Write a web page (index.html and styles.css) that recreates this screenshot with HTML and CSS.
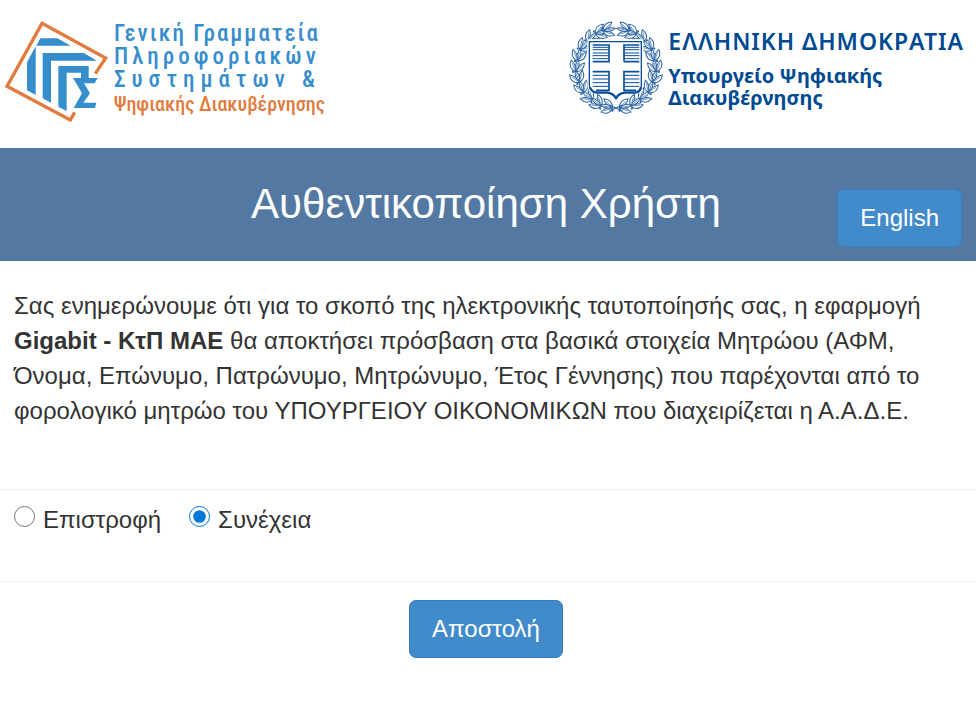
FILE: index.html
```html
<!DOCTYPE html>
<html lang="el">
<head>
<meta charset="utf-8">
<meta name="viewport" content="width=device-width, initial-scale=1">
<title>Αυθεντικοποίηση Χρήστη</title>
<link rel="stylesheet" href="styles.css">
</head>
<body>
<header class="brands">
  <div class="brand gsis">
    <svg class="gsis-mark" viewBox="0 0 360 360" aria-hidden="true">
      <path d="M286 191 317 144 126 40 21 229 211 330 224 307" fill="none" stroke="#e17b3e" stroke-width="10"/>
      <g fill="#368dcc">
        <path d="M121 85H172L212 107H109Z"/>
        <path d="M81 157 107 109V255L81 241Z"/>
        <path d="M128 129H251L291 152H153V278L128 265Z"/>
        <path d="M175 168H266V204H293L284 220H252L270 250 250 278H289L285 294H221L246 250 219 204H243V188H200V303L175 290Z"/>
      </g>
    </svg>
    <div class="gsis-name">
      <span class="row-a">Γενική Γραμματεία</span>
      <span class="row-b">Πληροφοριακών</span>
      <span class="row-c">Συστημάτων &amp;</span>
      <span class="row-d">Ψηφιακής Διακυβέρνησης</span>
    </div>
  </div>
  <div class="brand ministry">
    <svg class="emblem" viewBox="0 0 330 345" aria-hidden="true">
      <defs>
        <g id="leaves" fill="#fff" stroke="#2d66a5" stroke-width="3">
          <path d="M-2 14Q-25 8-20-17Q-2-8-2 14Z"/>
          <path d="M2 14Q23 8 21-16Q2-8 2 14Z"/>
          <path d="M0 13Q-10-4 1-23Q11-4 0 13Z"/>
          <path d="M-5 7-15-9M5 7 15-8M0 16V-12" fill="none" stroke-width="2"/>
          <circle cx="-8" cy="16" r="2"/>
        </g>
        <g id="branch">
          <use href="#leaves" transform="rotate(12 168 175) translate(168 293) rotate(-90)"/>
          <use href="#leaves" transform="rotate(28 168 175) translate(168 293) rotate(-80)"/>
          <use href="#leaves" transform="rotate(44 168 175) translate(168 293) rotate(-98)"/>
          <use href="#leaves" transform="rotate(60 168 175) translate(168 293) rotate(-82)"/>
          <use href="#leaves" transform="rotate(76 168 175) translate(168 293) rotate(-98)"/>
          <use href="#leaves" transform="rotate(92 168 175) translate(168 293) rotate(-82)"/>
          <use href="#leaves" transform="rotate(108 168 175) translate(168 293) rotate(-98)"/>
          <use href="#leaves" transform="rotate(124 168 175) translate(168 293) rotate(-82)"/>
          <use href="#leaves" transform="rotate(140 168 175) translate(168 293) rotate(-98)"/>
          <use href="#leaves" transform="rotate(156 168 175) translate(168 293) rotate(-84)"/>
          <use href="#leaves" transform="rotate(168 168 175) translate(168 293) rotate(-92)"/>
        </g>
      </defs>
      <use href="#branch"/>
      <use href="#branch" transform="translate(336 0) scale(-1 1)"/>
      <path d="M148 285 188 303M188 285 148 303" stroke="#2d66a5" stroke-width="4"/>
      <path d="M88 94H244V225Q244 243 226 246H194Q178 248 168 265Q158 248 142 246H108Q88 243 88 225Z" fill="#fff" stroke="#fff" stroke-width="12"/>
      <path d="M88 95H244V225Q244 243 226 247H194Q176 249 168 263Q160 249 142 247H108Q88 243 88 225Z" fill="#fff" stroke="#0b4f98" stroke-width="4"/>
      <path d="M90 232Q96 247 110 248H142Q158 250 168 264Q178 250 194 248H226Q240 246 243 232" fill="none" stroke="#0b4f98" stroke-width="7"/>
      <g fill="none" stroke="#0b4f98">
        <path d="M98 105H147V155H98M192 155V105H238M192 155H238M98 185H147V241H108M238 185H192V241H228" stroke-width="5"/>
        <path d="M98 112H146M98 119H146M98 129H146M98 137H146M98 146H146M192 112H238M192 119H238M192 129H238M192 137H238M192 146H238M98 196H146M98 207H146M98 218H146M98 229H146M192 196H238M192 207H238M192 218H238M192 229H238" stroke-width="3"/>
      </g>
    </svg>
    <div class="ministry-name">
      <span class="state">ΕΛΛΗΝΙΚΗ ΔΗΜΟΚΡΑΤΙΑ</span>
      <span class="office">Υπουργείο Ψηφιακής<br>Διακυβέρνησης</span>
    </div>
  </div>
</header>
<div class="title-bar">
  <h1>Αυθεντικοποίηση Χρήστη</h1>
  <button class="btn language" type="button">English</button>
</div>
<main>
  <p class="notice">Σας ενημερώνουμε ότι για το σκοπό της ηλεκτρονικής ταυτοποίησής σας, η εφαρμογή <strong>Gigabit - ΚτΠ ΜΑΕ</strong> θα αποκτήσει πρόσβαση στα βασικά στοιχεία Μητρώου (ΑΦΜ, Όνομα, Επώνυμο, Πατρώνυμο, Μητρώνυμο, Έτος Γέννησης) που παρέχονται από το φορολογικό μητρώο του ΥΠΟΥΡΓΕΙΟΥ ΟΙΚΟΝΟΜΙΚΩΝ που διαχειρίζεται η Α.Α.Δ.Ε.</p>
  <form>
    <div class="choices">
      <label for="back"><input type="radio" id="back" name="choice" value="back">Επιστροφή</label>
      <label for="next"><input type="radio" id="next" name="choice" value="next" checked>Συνέχεια</label>
    </div>
    <div class="actions"><button class="btn" type="submit">Αποστολή</button></div>
  </form>
</main>
</body>
</html>
```
FILE: styles.css
```css
* { box-sizing: border-box; }
body {
  margin: 0;
  background: #fff;
  color: #333;
  font: 24px/35px "Liberation Sans", Arial, sans-serif;
}
.brands {
  display: flex;
  justify-content: space-between;
  align-items: flex-start;
  padding: 10px 12px 18px 0;
}
.brand { display: flex; }
.brand svg { display: block; flex: none; }
.gsis-mark { width: 120px; height: 120px; }
.gsis-name {
  display: flex;
  flex-direction: column;
  margin-left: -6px;
  padding-top: 12px;
  color: #368dcc;
  font: 500 23px/23px "Roboto Condensed", "Liberation Sans Narrow", Roboto, sans-serif;
  white-space: nowrap;
}
.row-a { letter-spacing: 2px; }
.row-b { letter-spacing: 4px; }
.row-c { letter-spacing: 6px; }
.row-d { color: #e17b3e; font-size: 20px; line-height: 26px; }
.emblem { width: 110px; height: 115px; }
.ministry-name {
  display: flex;
  flex-direction: column;
  margin-left: -2px;
  padding-top: 15px;
  color: #004a91;
  font-family: "Noto Sans", "Open Sans", sans-serif;
  font-weight: 700;
  white-space: nowrap;
}
.state { font-size: 23px; font-weight: 600; line-height: 32px; letter-spacing: 1px; }
.office { padding-top: 8px; font-size: 20px; line-height: 22px; }
.title-bar {
  display: grid;
  grid-template-columns: 1fr auto 1fr;
  align-items: end;
  padding: 28px 14px 14px 10px;
  background: #5379a3;
}
h1 {
  grid-column: 2;
  align-self: start;
  margin: 0;
  color: #fff;
  font-size: 42px;
  font-weight: 400;
  line-height: 56px;
}
.btn {
  padding: 10px 22px;
  border: 1px solid #357ebd;
  border-radius: 7px;
  background: #428bca;
  color: #fff;
  font: 24px/36px "Liberation Sans", Arial, sans-serif;
}
.language { justify-self: end; margin-top: 13px; }
.notice { margin: 0; padding: 27px 14px 61px; }
.choices {
  display: flex;
  gap: 28px;
  padding: 12px 14px 44px;
  border: solid #eee;
  border-width: 1px 0;
}
.choices label { display: flex; align-items: flex-start; }
.choices input {
  width: 21px;
  height: 21px;
  margin: 4px 8px 0 0;
  accent-color: #0078d7;
}
.actions { padding: 18px 4px 50px 0; text-align: center; }
```
